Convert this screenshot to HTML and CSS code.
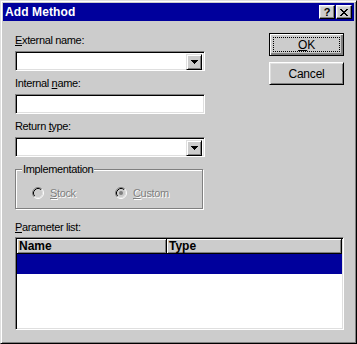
FILE: index.html
```html
<!DOCTYPE html>
<html lang="en">
<head>
    <meta charset="UTF-8">
    <title>Add Method</title>
    <link rel="stylesheet" href="styles.css">
</head>
<body>
    <div class="window">
        <div class="titlebar">
            <span class="title">Add Method</span>
            <div class="title-buttons">
                <span class="tbtn help">?</span>
                <span class="tbtn close">
                    <svg width="8" height="7" viewBox="0 0 8 7" shape-rendering="crispEdges">
                        <path d="M0 0h2v1h-2z M6 0h2v1h-2z M1 1h2v1h-2z M5 1h2v1h-2z M2 2h4v1h-4z M3 3h2v1h-2z M2 4h4v1h-4z M1 5h2v1h-2z M5 5h2v1h-2z M0 6h2v1h-2z M6 6h2v1h-2z" fill="#000"/>
                    </svg>
                </span>
            </div>
        </div>

        <div class="content">
            <div class="top">
                <div class="fields">
                    <div class="lbl"><u>E</u>xternal name:</div>
                    <div class="field combo">
                        <span class="combo-btn">
                            <svg width="7" height="4" viewBox="0 0 7 4" shape-rendering="crispEdges">
                                <path d="M0 0h7v1h-7z M1 1h5v1h-5z M2 2h3v1h-3z M3 3h1v1h-1z" fill="#000"/>
                            </svg>
                        </span>
                    </div>

                    <div class="lbl">Internal <u>n</u>ame:</div>
                    <div class="field"></div>

                    <div class="lbl">Return <u>t</u>ype:</div>
                    <div class="field combo">
                        <span class="combo-btn">
                            <svg width="7" height="4" viewBox="0 0 7 4" shape-rendering="crispEdges">
                                <path d="M0 0h7v1h-7z M1 1h5v1h-5z M2 2h3v1h-3z M3 3h1v1h-1z" fill="#000"/>
                            </svg>
                        </span>
                    </div>

                    <fieldset class="group">
                        <legend>Implementation</legend>
                        <div class="radios">
                            <span class="radio">
                                <svg width="12" height="12" viewBox="0 0 12 12">
                                    <circle cx="6" cy="6" r="5" fill="#cccccc"/>
                                    <path d="M2.11 9.89 A5.5 5.5 0 0 1 9.89 2.11" fill="none" stroke="#808080"/>
                                    <path d="M9.89 2.11 A5.5 5.5 0 0 1 2.11 9.89" fill="none" stroke="#fff"/>
                                    <path d="M2.82 9.18 A4.5 4.5 0 0 1 9.18 2.82" fill="none" stroke="#000"/>
                                    <path d="M9.18 2.82 A4.5 4.5 0 0 1 2.82 9.18" fill="none" stroke="#dfdfdf"/>
                                </svg>
                                <span class="disabled"><u>S</u>tock</span>
                            </span>
                            <span class="radio">
                                <svg width="12" height="12" viewBox="0 0 12 12">
                                    <circle cx="6" cy="6" r="5" fill="#cccccc"/>
                                    <path d="M2.11 9.89 A5.5 5.5 0 0 1 9.89 2.11" fill="none" stroke="#808080"/>
                                    <path d="M9.89 2.11 A5.5 5.5 0 0 1 2.11 9.89" fill="none" stroke="#fff"/>
                                    <path d="M2.82 9.18 A4.5 4.5 0 0 1 9.18 2.82" fill="none" stroke="#000"/>
                                    <path d="M9.18 2.82 A4.5 4.5 0 0 1 2.82 9.18" fill="none" stroke="#dfdfdf"/>
                                    <circle cx="6" cy="6" r="2" fill="#808080"/>
                                </svg>
                                <span class="disabled"><u>C</u>ustom</span>
                            </span>
                        </div>
                    </fieldset>
                </div>

                <div class="buttons">
                    <button class="btn default"><u>O</u>K</button>
                    <button class="btn">Cancel</button>
                </div>
            </div>

            <div class="lbl list-lbl"><u>P</u>arameter list:</div>
            <div class="list">
                <div class="list-head">
                    <div class="col col-name">Name</div>
                    <div class="col col-type">Type</div>
                </div>
                <div class="list-row selected"></div>
            </div>
        </div>
    </div>
</body>
</html>
```

FILE: styles.css
```css
html, body {
    margin: 0;
    padding: 0;
}
body {
    background: #cccccc;
    font-family: 'Liberation Sans', Arial, sans-serif;
    font-size: 11px;
    color: #000;
}
u {
    text-decoration: underline;
    text-underline-offset: 1px;
}
.window {
    width: 357px;
    height: 344px;
    box-sizing: border-box;
    background: #cccccc;
    border: 1px solid;
    border-color: #dfdfdf #000 #000 #dfdfdf;
    box-shadow: inset 1px 1px #fff, inset -1px -1px #808080;
    padding: 2px;
}
.titlebar {
    height: 18px;
    background: #00009c;
    display: flex;
    align-items: center;
    justify-content: space-between;
    padding: 0 2px;
    color: #fff;
}
.title {
    font-weight: bold;
    font-size: 12px;
    letter-spacing: 0.1px;
}
.title-buttons {
    display: flex;
    gap: 1px;
}
.tbtn {
    width: 16px;
    height: 14px;
    box-sizing: border-box;
    background: #cccccc;
    border: 1px solid;
    border-color: #fff #000 #000 #fff;
    box-shadow: inset -1px -1px #808080, inset 1px 1px #dfdfdf;
    display: flex;
    align-items: center;
    justify-content: center;
    color: #000;
}
.help {
    font-weight: bold;
    font-size: 11px;
    line-height: 12px;
}
.content {
    padding: 13px 10px 0 12px;
}
.top {
    display: flex;
    justify-content: space-between;
}
.fields {
    width: 190px;
}
.lbl {
    height: 13px;
    line-height: 13px;
    margin-bottom: 4px;
    letter-spacing: -0.35px;
}
.field {
    height: 20px;
    box-sizing: border-box;
    background: #fff;
    border: 1px solid;
    border-color: #808080 #fff #fff #808080;
    box-shadow: inset 1px 1px #000, inset -1px -1px #dfdfdf;
    padding: 2px;
    margin-bottom: 6px;
}
.combo {
    display: flex;
    justify-content: flex-end;
}
.combo-btn {
    width: 16px;
    height: 16px;
    box-sizing: border-box;
    background: #cccccc;
    border: 1px solid;
    border-color: #dfdfdf #000 #000 #dfdfdf;
    box-shadow: inset 1px 1px #fff, inset -1px -1px #808080;
    display: flex;
    align-items: center;
    justify-content: center;
}
.group {
    margin: 1px 0 0;
    padding: 0 0 9px 6px;
    border: 1px solid #808080;
    box-shadow: inset 1px 1px #fff, 1px 1px #fff;
    width: 188px;
    box-sizing: border-box;
    height: 46px;
}
.group legend {
    padding: 0 1px;
    letter-spacing: -0.35px;
    line-height: 13px;
    background: #cccccc;
}
.radios {
    display: flex;
    padding: 11px 0 0 10px;
}
.radio {
    display: flex;
    align-items: center;
    gap: 6px;
    width: 83px;
    letter-spacing: -0.35px;
}
.disabled {
    color: #808080;
    text-shadow: 1px 1px #fff;
}
.buttons {
    display: flex;
    flex-direction: column;
    gap: 6px;
    width: 75px;
    margin-top: -1px;
}
.btn {
    width: 75px;
    height: 23px;
    box-sizing: border-box;
    background: #cccccc;
    border: 1px solid;
    border-color: #fff #000 #000 #fff;
    box-shadow: inset 1px 1px #dfdfdf, inset -1px -1px #808080;
    font-family: 'Liberation Sans', Arial, sans-serif;
    font-size: 12px;
    letter-spacing: -0.2px;
    color: #000;
    padding: 0;
}
.btn.default {
    border-color: #000;
    box-shadow: inset 1px 1px #fff, inset -1px -1px #808080, inset -2px -2px #808080;
    outline: 1px dotted #000;
    outline-offset: -5px;
}
.list-lbl {
    margin-top: 12px;
    margin-bottom: 3px;
}
.list {
    width: 329px;
    height: 93px;
    box-sizing: border-box;
    background: #fff;
    border: 1px solid;
    border-color: #808080 #fff #fff #808080;
    box-shadow: inset 1px 1px #000, inset -1px -1px #dfdfdf;
    padding: 1px;
}
.list-head {
    display: flex;
    height: 15px;
}
.col {
    box-sizing: border-box;
    height: 15px;
    background: #cccccc;
    border-right: 1px solid #000;
    border-bottom: 1px solid #000;
    box-shadow: inset 1px 1px #fff, inset -1px -1px #808080;
    font-weight: bold;
    font-size: 12px;
    line-height: 14px;
    padding-left: 2px;
}
.col-name {
    width: 150px;
}
.col-type {
    flex: 1;
}
.list-row {
    height: 20px;
}
.selected {
    background: #00009c;
}
```
